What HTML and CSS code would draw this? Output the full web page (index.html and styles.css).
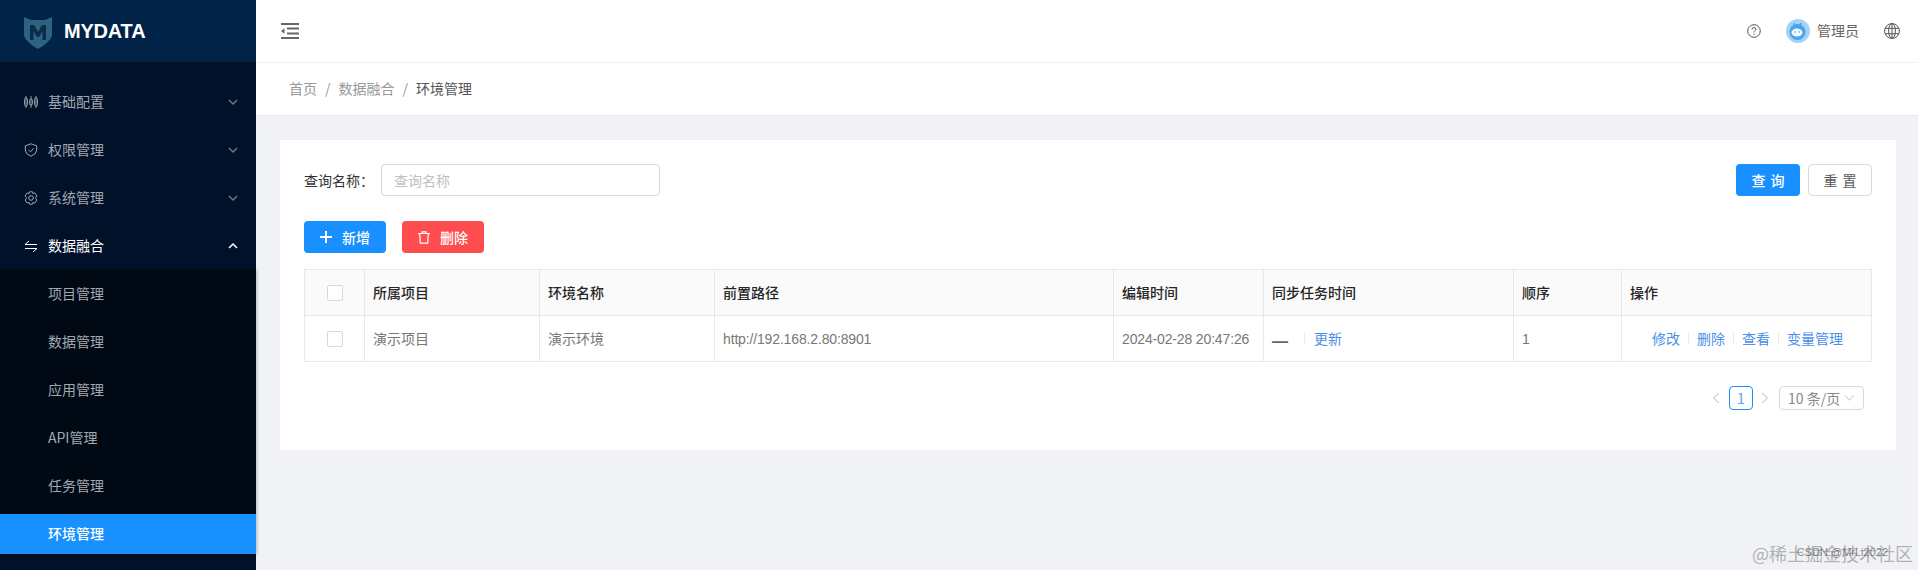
FILE: index.html
```html
<!DOCTYPE html>
<html lang="zh-CN">
<head>
  <meta charset="UTF-8" />
  <meta name="viewport" content="width=device-width, initial-scale=1.0"/>
  <title>环境管理</title>
  <link rel="stylesheet" href="styles.css">
</head>
<body>
  <aside class="sidebar">
    <div class="logo">
      <svg class="logo-mark" viewBox="0 0 28 33" width="28" height="33">
        <path d="M0 1 L7 4 H21 L28 1 V20 Q26 26 14 33 Q2 26 0 20 Z" fill="#2b6380"/>
        <path d="M6 24 V9 H10 L14 16 L18 9 H22 V24 H18.500 V15 L15 21 H13 L9.500 15 V24 Z" fill="#0d2a48"/>
      </svg>
      <span class="logo-text">MYDATA</span>
    </div>
    <nav class="menu">
      <a class="menu-item">
        <svg class="menu-icon" viewBox="0 0 14 14" width="14" height="14" fill="none" stroke="currentColor" stroke-width=".9">
          <rect x=".5" y="3" width="3" height="8" rx="1.500"/><rect x="5.500" y="4" width="3" height="6" rx="1.500"/><rect x="10.500" y="3" width="3" height="8" rx="1.500"/>
          <path d="M2 1v12M7 1v12M12 1v12"/>
        </svg>
        <span>基础配置</span>
        <svg class="menu-arrow" viewBox="0 0 10 10" width="10" height="10"><path d="M1 3 L5 7 L9 3" fill="none" stroke="currentColor" stroke-width="1.500"/></svg>
      </a>
      <a class="menu-item">
        <svg class="menu-icon" viewBox="0 0 14 14" width="14" height="14" fill="none" stroke="currentColor">
          <path d="M7 .8 L12.700 2.800 V7 Q12.700 11 7 13.300 Q1.300 11 1.300 7 V2.800 Z"/><path d="M4.500 6.800 L6.500 8.800 L9.700 5.200"/>
        </svg>
        <span>权限管理</span>
        <svg class="menu-arrow" viewBox="0 0 10 10" width="10" height="10"><path d="M1 3 L5 7 L9 3" fill="none" stroke="currentColor" stroke-width="1.500"/></svg>
      </a>
      <a class="menu-item">
        <svg class="menu-icon" viewBox="0 0 14 14" width="14" height="14" fill="none" stroke="currentColor">
          <path d="M5.500 .8 H8.500 L9 2.600 L10.800 1.900 L13 5 L11.700 6.300 V7.700 L13 9 L10.800 12.100 L9 11.400 L8.500 13.200 H5.500 L5 11.400 L3.200 12.100 L1 9 L2.300 7.700 V6.300 L1 5 L3.200 1.900 L5 2.600 Z"/><circle cx="7" cy="7" r="2.300"/>
        </svg>
        <span>系统管理</span>
        <svg class="menu-arrow" viewBox="0 0 10 10" width="10" height="10"><path d="M1 3 L5 7 L9 3" fill="none" stroke="currentColor" stroke-width="1.500"/></svg>
      </a>
      <a class="menu-item is-open">
        <svg class="menu-icon" viewBox="0 0 14 14" width="14" height="14" fill="none" stroke="currentColor">
          <path d="M1 5.500 H13 M1 5.500 L5 2 M1 9.500 H13 M13 9.500 L9 13"/>
        </svg>
        <span>数据融合</span>
        <svg class="menu-arrow" viewBox="0 0 10 10" width="10" height="10"><path d="M1 7 L5 3 L9 7" fill="none" stroke="currentColor" stroke-width="1.500"/></svg>
      </a>
      <div class="submenu">
        <a class="submenu-item">项目管理</a>
        <a class="submenu-item">数据管理</a>
        <a class="submenu-item">应用管理</a>
        <a class="submenu-item">API管理</a>
        <a class="submenu-item">任务管理</a>
        <a class="submenu-item is-active">环境管理</a>
      </div>
    </nav>
  </aside>

  <div class="main">
    <header class="topbar">
      <svg class="fold-icon" viewBox="0 0 18 16" width="18" height="16">
        <path d="M0 0h18v2H0zM0 14h18v2H0zM6 4.500h12v2H6zM6 9.500h12v2H6zM0 8l3.500-2.800v5.600z" fill="#666"/>
      </svg>
      <div class="topbar-right">
        <svg class="help-icon" viewBox="0 0 14 14" width="14" height="14" fill="none" stroke="#555">
          <circle cx="7" cy="7" r="6.300"/>
          <path d="M5 5.500 Q5 3.600 7 3.600 Q9 3.600 9 5.300 Q9 6.300 7.800 6.900 Q7 7.300 7 8.500"/>
          <path d="M7 9.700v1.200"/>
        </svg>
        <svg class="avatar" viewBox="0 0 24 24" width="24" height="24">
          <circle cx="12" cy="12" r="12" fill="#a3d4f7"/>
          <circle cx="11.500" cy="13" r="8" fill="#4ba3ea"/>
          <ellipse cx="11" cy="13.500" rx="5.500" ry="4" fill="#f4f9fd"/>
          <circle cx="9" cy="13" r=".7" fill="#4b7fae"/>
          <circle cx="13" cy="13" r=".7" fill="#4b7fae"/>
          <path d="M8 7 L8.500 4 M14 7 L15 4" stroke="#4ba3ea" stroke-width="1.500"/>
        </svg>
        <span class="user-name">管理员</span>
        <svg class="globe-icon" viewBox="0 0 16 16" width="16" height="16" fill="none" stroke="#555">
          <circle cx="8" cy="8" r="7.400"/>
          <ellipse cx="8" cy="8" rx="3.400" ry="7.400"/>
          <path d="M8 .6v14.800M1 5.300h14M1 10.700h14"/>
        </svg>
      </div>
    </header>

    <div class="breadcrumb">
      <span>首页</span><i>/</i><span>数据融合</span><i>/</i><span class="current">环境管理</span>
    </div>

    <section class="card">
      <div class="query-row">
        <label class="query-label">查询名称：</label>
        <input class="query-input" type="text" placeholder="查询名称" />
        <div class="query-actions">
          <button class="btn btn-primary btn-spaced">查 询</button>
          <button class="btn btn-default btn-spaced">重 置</button>
        </div>
      </div>

      <div class="tool-row">
        <button class="btn btn-primary btn-tool">
          <svg viewBox="0 0 12 12" width="12" height="12"><path d="M5 0h2v5h5v2H7v5H5V7H0V5h5z" fill="#fff"/></svg>
          <span>新增</span>
        </button>
        <button class="btn btn-danger btn-tool">
          <svg viewBox="0 0 12 13" width="12" height="13" fill="none" stroke="#fff" stroke-width="1.200">
            <path d="M0 2.500h12M4 2.500V.8h4v1.700M1.700 2.500l.6 9.700h7.400l.6-9.700"/>
          </svg>
          <span>删除</span>
        </button>
      </div>

      <table class="data-table">
        <colgroup>
          <col class="col-check"><col class="col-project"><col class="col-env"><col class="col-path">
          <col class="col-edit"><col class="col-sync"><col class="col-order"><col class="col-action">
        </colgroup>
        <thead>
          <tr>
            <th class="cell-check"><span class="checkbox"></span></th>
            <th>所属项目</th>
            <th>环境名称</th>
            <th>前置路径</th>
            <th>编辑时间</th>
            <th>同步任务时间</th>
            <th>顺序</th>
            <th>操作</th>
          </tr>
        </thead>
        <tbody>
          <tr>
            <td class="cell-check"><span class="checkbox"></span></td>
            <td>演示项目</td>
            <td>演示环境</td>
            <td class="cell-num">http://192.168.2.80:8901</td>
            <td class="cell-num">2024-02-28 20:47:26</td>
            <td><span class="dash">—</span><span class="sep sep-wide"></span><a class="link">更新</a></td>
            <td class="cell-num">1</td>
            <td class="cell-actions"><a class="link">修改</a><span class="sep"></span><a class="link">删除</a><span class="sep"></span><a class="link">查看</a><span class="sep"></span><a class="link">变量管理</a></td>
          </tr>
        </tbody>
      </table>

      <div class="pager">
        <svg class="pager-arrow" viewBox="0 0 8 12" width="8" height="12"><path d="M7 1 L1.500 6 L7 11" fill="none" stroke="#bbb"/></svg>
        <span class="pager-num">1</span>
        <svg class="pager-arrow" viewBox="0 0 8 12" width="8" height="12"><path d="M1 1 L6.500 6 L1 11" fill="none" stroke="#bbb"/></svg>
        <span class="pager-size">10 条/页
          <svg viewBox="0 0 12 8" width="11" height="8"><path d="M1 1 L6 6.500 L11 1" fill="none" stroke="#bbb"/></svg>
        </span>
      </div>
    </section>
  </div>

  <div class="watermark">@稀土掘金技术社区</div>
  <div class="watermark watermark-small">CSDN @MrLi2022</div>
</body>
</html>
```

FILE: styles.css
```css
* {
  margin: 0;
  padding: 0;
  box-sizing: border-box;
}

body {
  display: flex;
  height: 570px;
  overflow: hidden;
  background: #f0f2f5;
  font-family: "Noto Sans CJK SC", "Liberation Sans", sans-serif;
  font-size: 14px;
  color: #666;
}

/* sidebar */
.sidebar {
  width: 256px;
  flex-shrink: 0;
  display: flex;
  flex-direction: column;
  background: #001a36;
}

.logo {
  height: 62px;
  display: flex;
  align-items: center;
  padding-left: 24px;
  background: #012347;
}

.logo-mark {
  margin-right: 12px;
  margin-top: 2px;
}

.logo-text {
  font-family: "Liberation Sans", sans-serif;
  font-size: 20px;
  font-weight: 700;
  letter-spacing: -.2px;
  color: #fff;
}

.menu {
  flex: 1;
  padding-top: 16px;
  background: #001129;
}

.menu-item {
  height: 48px;
  display: flex;
  align-items: center;
  padding: 0 18px 0 24px;
  color: #a0a8b2;
}

.menu-item span {
  margin-left: 10px;
  margin-bottom: 2px;
  flex: 1;
  line-height: 20px;
}

.menu-icon {
  flex-shrink: 0;
}

.menu-arrow {
  color: #6d7885;
  flex-shrink: 0;
}

.menu-item.is-open {
  color: #fff;
}

.menu-item.is-open .menu-arrow {
  color: #fff;
}

.submenu {
  background: #000914;
  padding-top: 4px;
  box-shadow: 0 0 4px rgba(0, 0, 0, .4);
}

.submenu-item {
  display: flex;
  align-items: center;
  height: 40px;
  margin-bottom: 8px;
  padding: 0 0 2px 48px;
  color: #a0a8b2;
}

.submenu-item:last-child {
  margin-bottom: 0;
}

.submenu-item.is-active {
  background: #1890ff;
  color: #fff;
  font-weight: 500;
}

/* main */
.main {
  flex: 1;
  min-width: 0;
}

.topbar {
  height: 63px;
  display: flex;
  align-items: center;
  padding: 0 18px 0 25px;
  background: #fff;
  border-bottom: 1px solid #f0f0f0;
}

.fold-icon {
  margin-top: -1px;
}

.topbar-right {
  margin-left: auto;
  display: flex;
  align-items: center;
}

.help-icon {
  margin-right: 25px;
}

.avatar {
  margin-right: 7px;
}

.user-name {
  margin-right: 25px;
  margin-top: -2px;
  color: #666;
  font-size: 14px;
}

.breadcrumb {
  height: 53px;
  display: flex;
  align-items: center;
  padding: 0 0 2px 33px;
  background: #fff;
  border-bottom: 1px solid #e8e8e8;
  color: #999;
}

.breadcrumb i {
  font-style: normal;
  margin: 0 8px;
}

.breadcrumb .current {
  color: #555;
}

/* card */
.card {
  margin: 24px 22px 0 24px;
  height: 310px;
  padding: 24px;
  background: #fff;
}

.query-row {
  display: flex;
  align-items: center;
  height: 32px;
  color: #333;
}

.query-label {
  width: 77px;
}

.query-input {
  width: 279px;
  height: 32px;
  padding: 0 12px;
  border: 1px solid #d9d9d9;
  border-radius: 4px;
  font: inherit;
  outline: none;
}

.query-input::placeholder {
  color: #bfbfbf;
}

.query-actions {
  margin-left: auto;
  display: flex;
  gap: 8px;
}

.btn {
  height: 32px;
  border: 1px solid transparent;
  border-radius: 4px;
  font: inherit;
  display: inline-flex;
  align-items: center;
  justify-content: center;
}

.btn-spaced {
  width: 64px;
  word-spacing: 2px;
}

.btn-primary {
  background: #1890ff;
  color: #fff;
  font-weight: 500;
}

.btn-default {
  background: #fff;
  border-color: #d9d9d9;
  color: #595959;
}

.btn-danger {
  background: #ff4d4f;
  color: #fff;
  font-weight: 500;
}

.tool-row {
  display: flex;
  gap: 16px;
  margin-top: 25px;
  margin-bottom: 16px;
}

.btn-tool {
  width: 82px;
  gap: 10px;
}

.data-table {
  width: 1568px;
  table-layout: fixed;
  border-collapse: separate;
  border-spacing: 0;
  border-top: 1px solid #e8e8e8;
  border-left: 1px solid #e8e8e8;
}

.col-check { width: 60px; }
.col-project { width: 175px; }
.col-env { width: 175px; }
.col-path { width: 399px; }
.col-edit { width: 150px; }
.col-sync { width: 250px; }
.col-order { width: 108px; }

.data-table th,
.data-table td {
  height: 46px;
  padding: 0 8px 2px;
  text-align: left;
  border-right: 1px solid #e8e8e8;
  border-bottom: 1px solid #e8e8e8;
  white-space: nowrap;
}

.data-table th {
  background: #fafafa;
  color: #262626;
  font-weight: 500;
}

.data-table td {
  color: #777;
}

.data-table .cell-check {
  padding: 0;
  text-align: center;
}

.data-table .cell-num {
  padding-bottom: 0;
  font-family: "Liberation Sans", sans-serif;
  letter-spacing: -.15px;
}

.checkbox {
  display: block;
  width: 16px;
  height: 16px;
  margin: 0 auto;
  border: 1px solid #d9d9d9;
  border-radius: 2px;
  background: #fff;
}

.dash {
  font-family: "Liberation Sans", sans-serif;
  font-size: 16px;
  font-weight: 700;
  line-height: 0;
  color: #666;
  vertical-align: -3px;
}

.link {
  color: #4a8fe8;
}

.sep {
  display: inline-block;
  width: 1px;
  height: 13px;
  margin: 0 8px;
  background: #ececec;
  vertical-align: -1px;
}

.sep-wide {
  margin: 0 9px 0 16px;
}

.data-table .cell-actions {
  padding-left: 30px;
}

.pager {
  display: flex;
  align-items: center;
  justify-content: flex-end;
  margin-top: 24px;
  padding-right: 8px;
  height: 24px;
}

.pager-num {
  width: 24px;
  height: 24px;
  margin: 0 8px 0 9px;
  display: flex;
  align-items: center;
  justify-content: center;
  border: 1px solid #1890ff;
  border-radius: 4px;
  color: #5a9fe8;
}

.pager-size {
  width: 85px;
  height: 24px;
  margin-left: 10px;
  display: flex;
  align-items: center;
  justify-content: space-between;
  padding: 0 8px;
  border: 1px solid #d9d9d9;
  border-radius: 4px;
  color: #888;
}

/* reprint marks over the page corner */
.watermark {
  position: absolute;
  right: 5px;
  bottom: 5px;
  font-size: 18px;
  line-height: 24px;
  color: rgba(120, 120, 120, .55);
}

.watermark-small {
  right: 30px;
  bottom: 6px;
  font-family: "Liberation Sans", sans-serif;
  font-size: 11px;
  color: rgba(90, 90, 90, .7);
}
```
